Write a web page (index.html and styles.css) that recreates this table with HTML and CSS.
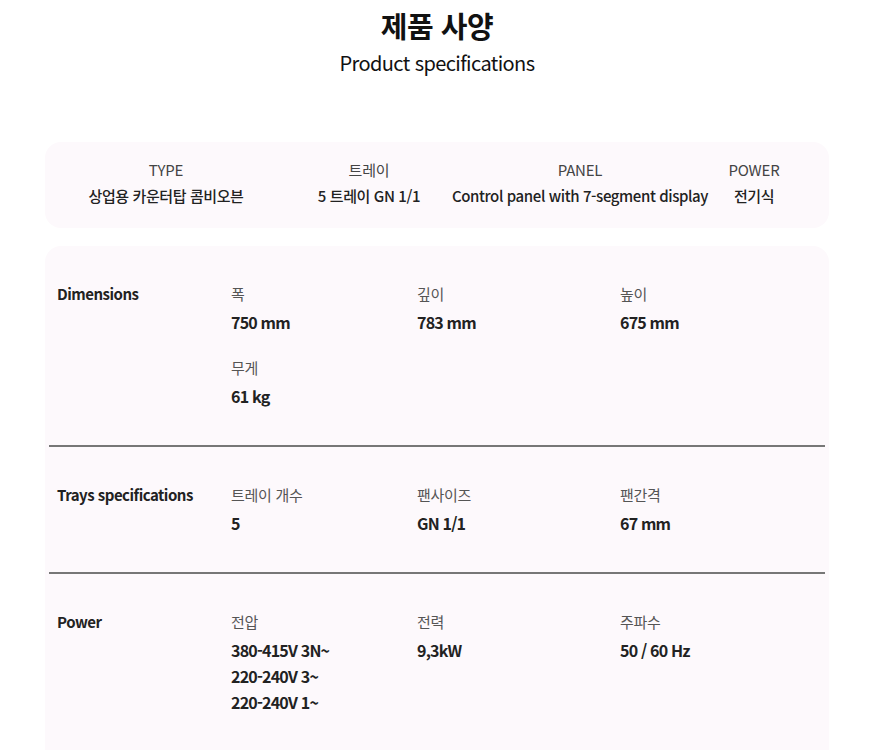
FILE: index.html
```html
<!DOCTYPE html>
<html lang="ko">
<head>
<meta charset="utf-8">
<title>제품 사양</title>
<link rel="stylesheet" href="styles.css">
</head>
<body>
<header class="head">
  <h1 class="title">제품 사양</h1>
  <p class="subtitle">Product specifications</p>
</header>

<section class="summary">
  <div class="sum-item"><span class="sum-label">TYPE</span><span class="sum-value">상업용 카운터탑 콤비오븐</span></div>
  <div class="sum-item"><span class="sum-label">트레이</span><span class="sum-value">5 트레이 GN 1/1</span></div>
  <div class="sum-item"><span class="sum-label">PANEL</span><span class="sum-value">Control panel with 7-segment display</span></div>
  <div class="sum-item"><span class="sum-label">POWER</span><span class="sum-value">전기식</span></div>
</section>

<section class="specs">
  <div class="row">
    <div class="row-title">Dimensions</div>
    <div class="items">
      <div class="item"><div class="label">폭</div><div class="value">750 mm</div></div>
      <div class="item"><div class="label">깊이</div><div class="value">783 mm</div></div>
      <div class="item"><div class="label">높이</div><div class="value">675 mm</div></div>
      <div class="item"><div class="label">무게</div><div class="value">61 kg</div></div>
    </div>
  </div>
  <div class="row">
    <div class="row-title">Trays specifications</div>
    <div class="items">
      <div class="item"><div class="label">트레이 개수</div><div class="value">5</div></div>
      <div class="item"><div class="label">팬사이즈</div><div class="value">GN 1/1</div></div>
      <div class="item"><div class="label">팬간격</div><div class="value">67 mm</div></div>
    </div>
  </div>
  <div class="row">
    <div class="row-title">Power</div>
    <div class="items">
      <div class="item"><div class="label">전압</div><div class="value">380-415V 3N~<br>220-240V 3~<br>220-240V 1~</div></div>
      <div class="item"><div class="label">전력</div><div class="value">9,3kW</div></div>
      <div class="item"><div class="label">주파수</div><div class="value">50 / 60 Hz</div></div>
    </div>
  </div>
</section>
</body>
</html>
```

FILE: styles.css
```css
* { box-sizing: border-box; }
html, body { margin: 0; padding: 0; background: #ffffff; }
body {
  font-family: "Noto Sans CJK KR", "Noto Sans", sans-serif;
  color: #222;
  padding: 0 40px 0 45px;
}
.head { text-align: center; padding-top: 6px; height: 142px; }
.title {
  margin: 0;
  font-size: 29px;
  line-height: 38px;
  font-weight: 700;
  letter-spacing: -0.5px;
  color: #111;
}
.subtitle {
  margin: 5px 0 0;
  font-size: 20px;
  line-height: 28px;
  font-weight: 400;
  color: #111;
  letter-spacing: -0.6px;
}
.summary {
  background: #fdf9fc;
  border-radius: 16px;
  display: grid;
  grid-template-columns: 242px 164px 258px 90px;
  padding: 16px 0 18px;
  width: 784px;
}
.sum-item {
  display: flex;
  flex-direction: column;
  align-items: center;
  white-space: nowrap;
}
.sum-label {
  font-size: 15px;
  line-height: 24px;
  color: #444;
  font-weight: 400;
  letter-spacing: -0.2px;
}
.sum-value {
  font-size: 15px;
  line-height: 28px;
  color: #222;
  font-weight: 500;
  letter-spacing: -0.4px;
}
.specs {
  margin-top: 18px;
  background: #fdf9fc;
  border-radius: 16px 16px 0 0;
  padding: 0 4px;
  width: 784px;
}
.row {
  display: grid;
  grid-template-columns: 174px 1fr;
  padding: 37px 0 36px 8px;
  border-bottom: 2px solid #777;
}
.row-title {
  font-size: 15px;
  line-height: 22px;
  font-weight: 700;
  letter-spacing: -0.5px;
  color: #222;
}
.items {
  display: grid;
  grid-template-columns: 186px 203px 1fr;
  row-gap: 22px;
}
.label {
  font-size: 15px;
  line-height: 22px;
  color: #555;
  letter-spacing: -0.3px;
}
.value {
  margin-top: 4px;
  font-size: 16px;
  line-height: 26px;
  font-weight: 700;
  color: #222;
  letter-spacing: -0.8px;
}
```
